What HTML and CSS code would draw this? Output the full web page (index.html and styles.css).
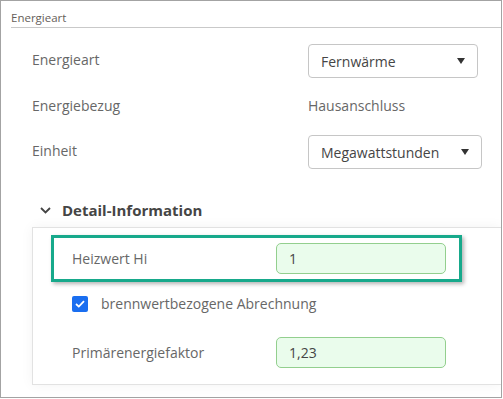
FILE: index.html
```html
<!DOCTYPE html>
<html lang="de">
<head>
    <meta charset="UTF-8">
    <meta name="viewport" content="width=device-width, initial-scale=1.0">
    <title>Energieart</title>
    <link rel="stylesheet" href="styles.css">
</head>
<body>
    <div class="frame">
        <div class="group-title">Energieart</div>

        <div class="form-rows">
            <div class="row row-first">
                <span class="label">Energieart</span>
                <div class="select select-short">
                    <span>Fernwärme</span>
                    <span class="caret"></span>
                </div>
            </div>
            <div class="row row-second">
                <span class="label">Energiebezug</span>
                <span class="value">Hausanschluss</span>
            </div>
            <div class="row row-third">
                <span class="label">Einheit</span>
                <div class="select select-wide">
                    <span>Megawattstunden</span>
                    <span class="caret"></span>
                </div>
            </div>
        </div>

        <div class="detail-head">
            <svg class="chevron" width="11" height="7" viewBox="0 0 11 7">
                <path d="M1 1 L5.5 5.5 L10 1" fill="none" stroke="#444" stroke-width="1.8"/>
            </svg>
            <span>Detail-Information</span>
        </div>

        <div class="detail-panel">
            <div class="highlight">
                <div class="field">
                    <span class="label">Heizwert Hi</span>
                    <input class="num-input" type="text" value="1">
                </div>
            </div>

            <label class="check-row">
                <span class="checkbox">
                    <svg width="10" height="8" viewBox="0 0 10 8">
                        <path d="M1 4 L3.8 6.6 L9 1.2" fill="none" stroke="#fff" stroke-width="1.8"/>
                    </svg>
                </span>
                <span>brennwertbezogene Abrechnung</span>
            </label>

            <div class="field field-plain">
                <span class="label">Primärenergiefaktor</span>
                <input class="num-input" type="text" value="1,23">
            </div>
        </div>
    </div>
</body>
</html>
```

FILE: styles.css
```css
body {
    margin: 0;
    padding: 0;
    background-color: #ffffff;
    font-family: 'Open Sans', 'Liberation Sans', sans-serif;
    font-size: 14px;
    color: #666666;
}

.frame {
    width: 500px;
    height: 396px;
    border: 1px solid #a3a3a3;
    overflow: hidden;
}

.group-title {
    margin: 10px 0 0 10px;
    padding-bottom: 2px;
    font-size: 11.5px;
    line-height: 14px;
    color: #66605a;
    border-bottom: 1px solid #c9c9c9;
}

.form-rows {
    padding-left: 31px;
}

.row {
    display: flex;
    align-items: center;
    height: 34px;
}

.row-first .label,
.row-third .label {
    padding-bottom: 3px;
}

.row-first {
    margin-top: 16px;
}

.row-second {
    margin-top: 10px;
}

.row-third {
    margin-top: 13px;
}

.label {
    width: 276px;
    flex-shrink: 0;
    color: #676767;
}

.value {
    color: #676767;
}

.select {
    box-sizing: border-box;
    height: 34px;
    display: flex;
    align-items: center;
    justify-content: space-between;
    padding: 0 12px 0 12px;
    border: 1px solid #c6c6c6;
    border-radius: 4px;
    color: #454545;
}

.select-short {
    width: 170px;
}

.select-wide {
    width: 174px;
}

.caret {
    width: 0;
    height: 0;
    border-left: 4.5px solid transparent;
    border-right: 4.5px solid transparent;
    border-top: 6px solid #333333;
}

.detail-head {
    display: flex;
    align-items: center;
    margin: 29px 0 0 39px;
    height: 24px;
    font-size: 15px;
    font-weight: bold;
    color: #454545;
}

.chevron {
    margin-right: 11px;
}

.detail-panel {
    margin: 5px 0 0 31px;
    height: 156px;
    border-top: 1px solid #e2e2e2;
    border-left: 1px solid #e2e2e2;
    border-bottom: 1px solid #e2e2e2;
    box-shadow: 0 0 12px rgba(0, 0, 0, 0.05);
}

.highlight {
    width: 405px;
    margin: 7px 0 0 18px;
    padding: 5px 0;
    border: 3px solid #17a98b;
    box-shadow: 2px 2px 4px rgba(0, 0, 0, 0.3);
}

.field {
    display: flex;
    align-items: center;
    padding-left: 18px;
}

.field .label {
    width: 204px;
}

.num-input {
    box-sizing: border-box;
    width: 170px;
    height: 31px;
    padding: 0 12px;
    border: 1px solid #93cf8e;
    border-radius: 5px;
    background-color: #eafcec;
    font-family: 'Open Sans', 'Liberation Sans', sans-serif;
    font-size: 14px;
    color: #454545;
}

.check-row {
    display: flex;
    align-items: center;
    margin: 13px 0 0 39px;
    height: 17px;
    color: #676767;
}

.checkbox {
    width: 16px;
    height: 16px;
    border-radius: 2px;
    background-color: #1a6ef0;
    display: flex;
    align-items: center;
    justify-content: center;
    margin-right: 13px;
}

.field-plain {
    margin-top: 25px;
    padding-left: 39px;
}
```
